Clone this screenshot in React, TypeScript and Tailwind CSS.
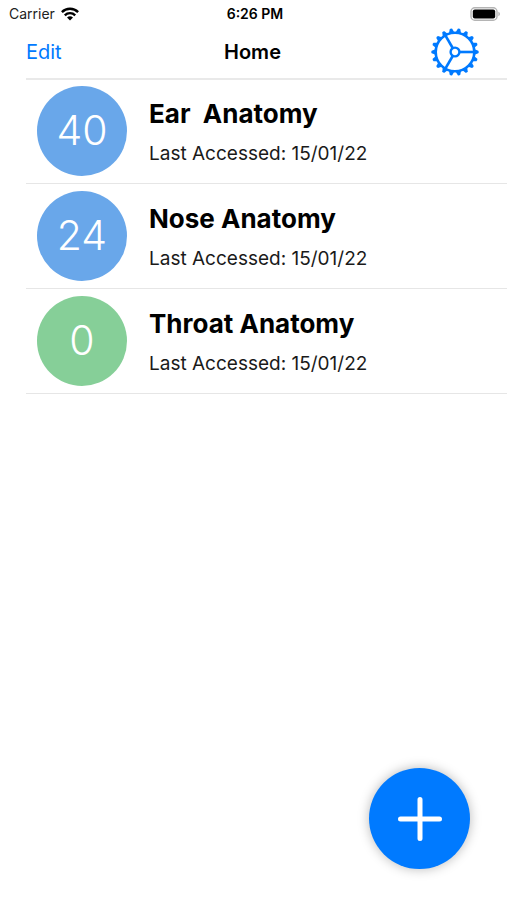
type Deck = {
  title: string;
  lastAccessed: string;
  due: number;
};

const decks: Deck[] = [
  { title: "Ear  Anatomy", lastAccessed: "15/01/22", due: 40 },
  { title: "Nose Anatomy", lastAccessed: "15/01/22", due: 24 },
  { title: "Throat Anatomy", lastAccessed: "15/01/22", due: 0 },
];

const teeth = Array.from({ length: 18 }, (_, i) => i * 20);
const spokes = [0, 120, 240];

const WifiIcon = () => (
  <svg width="18" height="14" viewBox="0 0 18 14" aria-hidden="true">
    <g fill="none" stroke="black" strokeWidth="2.4">
      <path d="M0.9 5.1a11.5 11.5 0 0 1 16.2 0" />
      <path d="M3.8 8.3a7.4 7.4 0 0 1 10.4 0" />
    </g>
    <path d="M9 13.6L6 10.6a4.3 4.3 0 0 1 6 0z" />
  </svg>
);

const BatteryIcon = () => (
  <svg width="31" height="14" viewBox="0 0 31 14" aria-hidden="true">
    <rect
      x="1"
      y="0.8"
      width="26"
      height="12.4"
      rx="3.8"
      fill="white"
      stroke="#b4b4b4"
      strokeWidth="1.4"
    />
    <rect x="2.8" y="2.6" width="22.4" height="8.8" rx="2" />
    <path d="M28.4 4.8c2 .7 2 3.7 0 4.4z" fill="#b4b4b4" />
  </svg>
);

const GearIcon = () => (
  <svg width="48" height="48" viewBox="-24 -24 48 48" aria-hidden="true">
    <g fill="none" stroke="#007aff" strokeWidth="2.6">
      <circle r="19.3" />
      <circle r="4.4" strokeWidth="2.4" />
      {spokes.map((angle) => (
        <path key={angle} d="M4.6 0H19" strokeWidth="2.6" transform={`rotate(${angle})`} />
      ))}
    </g>
    {teeth.map((angle) => (
      <path
        key={angle}
        d="M19.6 -2.7L23.3 -1.3Q24.2 0 23.3 1.3L19.6 2.7z"
        fill="#007aff"
        transform={`rotate(${angle})`}
      />
    ))}
  </svg>
);

const StatusBar = () => (
  <div className="grid h-[26px] grid-cols-3 items-center pt-0.5 pr-1.5 pl-[9px] text-sm">
    <div className="flex items-center gap-1.5 text-[#222]">
      <span>Carrier</span>
      <WifiIcon />
    </div>
    <span className="text-center font-semibold">6:26 PM</span>
    <div className="flex justify-end">
      <BatteryIcon />
    </div>
  </div>
);

const NavBar = () => (
  <header className="grid h-[53px] grid-cols-3 items-center pr-7 pb-0.5 pl-[26px]">
    <button type="button" className="justify-self-start text-xl text-[#007aff]">
      Edit
    </button>
    <h1 className="text-center text-xl font-semibold">Home</h1>
    <button type="button" aria-label="Settings" className="justify-self-end">
      <GearIcon />
    </button>
  </header>
);

const DeckRow = ({ deck }: { deck: Deck }) => (
  <li className="flex h-[105px] items-center gap-[22px] border-b border-[#e6e6e6] pl-[11px]">
    <div
      className={`flex size-[90px] shrink-0 items-center justify-center rounded-full text-[41px] font-light text-white ${
        deck.due > 0 ? "bg-[#69a7ea]" : "bg-[#86cf98]"
      }`}
    >
      {deck.due}
    </div>
    <div className="flex flex-col gap-3 pt-0.5">
      <h2 className="text-[26px] leading-8 font-bold whitespace-pre">{deck.title}</h2>
      <p className="text-[19px] leading-6 text-[#1a1a1a]">
        Last Accessed: {deck.lastAccessed}
      </p>
    </div>
  </li>
);

const App = () => {
  return (
    <div className="min-h-screen bg-white font-['Inter',sans-serif] text-black">
      <StatusBar />
      <NavBar />
      <ul className="ml-[26px] shadow-[inset_0_1px_0_#e9e9e9,0_-1px_0_#e9e9e9]">
        {decks.map((deck) => (
          <DeckRow key={deck.title} deck={deck} />
        ))}
      </ul>
      <button
        type="button"
        aria-label="Add deck"
        className="fixed right-[37px] bottom-[31px] flex size-[101px] items-center justify-center rounded-full bg-[#007aff] shadow-[0_0_12px_rgba(0,0,0,0.28)]"
      >
        <svg width="44" height="44" viewBox="0 0 44 44" aria-hidden="true">
          <path
            d="M22 2.5V41.5M2.5 22H41.5"
            stroke="white"
            strokeWidth="5"
            strokeLinecap="round"
          />
        </svg>
      </button>
    </div>
  );
};

export default App;
